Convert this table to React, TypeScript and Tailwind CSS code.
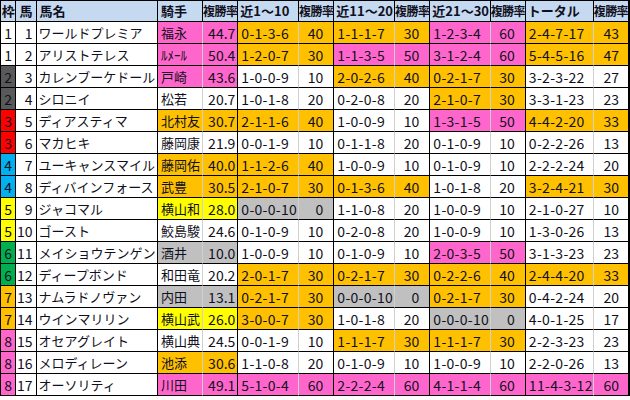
import React from 'react';

type Fill = 'w' | 'p' | 'o' | 'y' | 'g';

// セルの塗り(Excel の条件付き書式の色)
const FILL: Record<Fill, string> = {
    w: 'bg-white',
    p: 'bg-[#ff66cc]',
    o: 'bg-[#ffc000]',
    y: 'bg-[#ffff00]',
    g: 'bg-[#c0c0c0]',
};

// 枠番の色
const FRAME: Record<number, string> = {
    1: 'bg-white',
    2: 'bg-[#595959]',
    3: 'bg-[#ff0000]',
    4: 'bg-[#00b0f0]',
    5: 'bg-[#ffff00]',
    6: 'bg-[#00b050]',
    7: 'bg-[#ffc000]',
    8: 'bg-[#ff66cc]',
};

type Pair = [string, string, Fill];

type Row = {
    frame: number;
    no: number;
    name: string;
    jockey: string;
    rate: string;
    jf: Fill;
    recent: [Pair, Pair, Pair];
    total: Pair;
};

const rows: Row[] = [
    { frame: 1, no: 1, name: 'ワールドプレミア', jockey: '福永', rate: '44.7', jf: 'p', recent: [['0-1-3-6', '40', 'o'], ['1-1-1-7', '30', 'o'], ['1-2-3-4', '60', 'p']], total: ['2-4-7-17', '43', 'o'] },
    { frame: 1, no: 2, name: 'アリストテレス', jockey: 'ﾙﾒｰﾙ', rate: '50.4', jf: 'p', recent: [['1-2-0-7', '30', 'o'], ['1-1-3-5', '50', 'p'], ['3-1-2-4', '60', 'p']], total: ['5-4-5-16', '47', 'o'] },
    { frame: 2, no: 3, name: 'カレンブーケドール', jockey: '戸崎', rate: '43.6', jf: 'p', recent: [['1-0-0-9', '10', 'w'], ['2-0-2-6', '40', 'o'], ['0-2-1-7', '30', 'o']], total: ['3-2-3-22', '27', 'w'] },
    { frame: 2, no: 4, name: 'シロニイ', jockey: '松若', rate: '20.7', jf: 'w', recent: [['1-0-1-8', '20', 'w'], ['0-2-0-8', '20', 'w'], ['2-1-0-7', '30', 'o']], total: ['3-3-1-23', '23', 'w'] },
    { frame: 3, no: 5, name: 'ディアスティマ', jockey: '北村友', rate: '30.7', jf: 'o', recent: [['2-1-1-6', '40', 'o'], ['1-0-0-9', '10', 'w'], ['1-3-1-5', '50', 'p']], total: ['4-4-2-20', '33', 'o'] },
    { frame: 3, no: 6, name: 'マカヒキ', jockey: '藤岡康', rate: '21.9', jf: 'w', recent: [['0-0-1-9', '10', 'w'], ['0-1-1-8', '20', 'w'], ['0-1-0-9', '10', 'w']], total: ['0-2-2-26', '13', 'w'] },
    { frame: 4, no: 7, name: 'ユーキャンスマイル', jockey: '藤岡佑', rate: '40.0', jf: 'o', recent: [['1-1-2-6', '40', 'o'], ['1-0-0-9', '10', 'w'], ['0-1-0-9', '10', 'w']], total: ['2-2-2-24', '20', 'w'] },
    { frame: 4, no: 8, name: 'ディバインフォース', jockey: '武豊', rate: '30.5', jf: 'o', recent: [['2-1-0-7', '30', 'o'], ['0-1-3-6', '40', 'o'], ['1-0-1-8', '20', 'w']], total: ['3-2-4-21', '30', 'o'] },
    { frame: 5, no: 9, name: 'ジャコマル', jockey: '横山和', rate: '28.0', jf: 'y', recent: [['0-0-0-10', '0', 'g'], ['1-1-0-8', '20', 'w'], ['1-0-0-9', '10', 'w']], total: ['2-1-0-27', '10', 'w'] },
    { frame: 5, no: 10, name: 'ゴースト', jockey: '鮫島駿', rate: '24.6', jf: 'w', recent: [['0-1-0-9', '10', 'w'], ['0-2-0-8', '20', 'w'], ['1-0-0-9', '10', 'w']], total: ['1-3-0-26', '13', 'w'] },
    { frame: 6, no: 11, name: 'メイショウテンゲン', jockey: '酒井', rate: '10.0', jf: 'g', recent: [['1-0-0-9', '10', 'w'], ['0-1-0-9', '10', 'w'], ['2-0-3-5', '50', 'p']], total: ['3-1-3-23', '23', 'w'] },
    { frame: 6, no: 12, name: 'ディープボンド', jockey: '和田竜', rate: '20.2', jf: 'w', recent: [['2-0-1-7', '30', 'o'], ['0-2-1-7', '30', 'o'], ['0-2-2-6', '40', 'o']], total: ['2-4-4-20', '33', 'o'] },
    { frame: 7, no: 13, name: 'ナムラドノヴァン', jockey: '内田', rate: '13.1', jf: 'g', recent: [['0-2-1-7', '30', 'o'], ['0-0-0-10', '0', 'g'], ['0-2-1-7', '30', 'o']], total: ['0-4-2-24', '20', 'w'] },
    { frame: 7, no: 14, name: 'ウインマリリン', jockey: '横山武', rate: '26.0', jf: 'y', recent: [['3-0-0-7', '30', 'o'], ['1-0-1-8', '20', 'w'], ['0-0-0-10', '0', 'g']], total: ['4-0-1-25', '17', 'w'] },
    { frame: 8, no: 15, name: 'オセアグレイト', jockey: '横山典', rate: '24.5', jf: 'w', recent: [['0-0-1-9', '10', 'w'], ['1-1-1-7', '30', 'o'], ['1-1-1-7', '30', 'o']], total: ['2-2-3-23', '23', 'w'] },
    { frame: 8, no: 16, name: 'メロディレーン', jockey: '池添', rate: '30.6', jf: 'o', recent: [['1-1-0-8', '20', 'w'], ['0-1-0-9', '10', 'w'], ['1-0-0-9', '10', 'w']], total: ['2-2-0-26', '13', 'w'] },
    { frame: 8, no: 17, name: 'オーソリティ', jockey: '川田', rate: '49.1', jf: 'p', recent: [['5-1-0-4', '60', 'p'], ['2-2-2-4', '60', 'p'], ['4-1-1-4', '60', 'p']], total: ['11-4-3-12', '60', 'p'] },
];

const widths = [18, 21, 123, 48, 35, 62, 35, 62, 34, 61, 35, 61, 36];

const td = 'h-[22px] p-0 border-b border-black whitespace-nowrap overflow-hidden';
const blackR = 'border-r border-r-black';
const grayR = 'border-r border-r-[#d0d0d0]';
const num = 'text-[14px]';
const rateHead = 'text-[12px] tracking-[-0.6px]';

const App: React.FC = () => {
    return (
        <div className="w-[630px] h-[400px] bg-white font-['Noto_Sans_CJK_JP',sans-serif] text-[13px] leading-[20px] text-[#101020]">
            <table className="table-fixed border-separate border-spacing-0">
                <colgroup>
                    {widths.map((w, i) => (
                        <col key={i} style={{ width: w }} />
                    ))}
                </colgroup>
                <thead>
                    <tr className="bg-[#c5d9f1] font-bold">
                        <th className={`${td} border-t border-l border-black ${blackR} text-center`}>枠</th>
                        <th className={`${td} border-t ${blackR} text-center`}>馬</th>
                        <th className={`${td} border-t ${blackR} text-left pl-[3px]`}>馬名</th>
                        <th className={`${td} border-t ${blackR} text-left pl-[3px]`}>騎手</th>
                        <th className={`${td} border-t ${blackR} ${rateHead}`}>複勝率</th>
                        <th className={`${td} border-t ${blackR} text-left pl-[2px]`}>近1～10</th>
                        <th className={`${td} border-t ${blackR} ${rateHead}`}>複勝率</th>
                        <th className={`${td} border-t ${blackR} text-left pl-[2px]`}>近11～20</th>
                        <th className={`${td} border-t ${blackR} ${rateHead}`}>複勝率</th>
                        <th className={`${td} border-t ${blackR} text-left pl-[2px]`}>近21～30</th>
                        <th className={`${td} border-t ${blackR} ${rateHead}`}>複勝率</th>
                        <th className={`${td} border-t ${blackR} text-left pl-[2px]`}>トータル</th>
                        <th className={`${td} border-t border-r-2 border-r-black ${rateHead}`}>複勝率</th>
                    </tr>
                </thead>
                <tbody>
                    {rows.map((r) => (
                        <tr key={r.no}>
                            <td className={`${td} ${num} border-l border-l-black ${blackR} ${FRAME[r.frame]} text-center`}>{r.frame}</td>
                            <td className={`${td} ${num} ${blackR} text-right pr-[3px]`}>{r.no}</td>
                            <td className={`${td} ${blackR} pl-[2px]`}>{r.name}</td>
                            <td className={`${td} ${grayR} ${FILL[r.jf]} pl-[3px]`}>{r.jockey}</td>
                            <td className={`${td} ${num} ${blackR} ${FILL[r.jf]} text-right pr-[2px]`}>{r.rate}</td>
                            {r.recent.map(([rec, pct, f], i) => (
                                <React.Fragment key={i}>
                                    <td className={`${td} ${num} tracking-[0.3px] ${grayR} ${FILL[f]} pl-[3px]`}>{rec}</td>
                                    <td className={`${td} ${num} ${blackR} ${FILL[f]} text-right pr-[10px]`}>{pct}</td>
                                </React.Fragment>
                            ))}
                            <td className={`${td} ${num} tracking-[0.3px] ${grayR} ${FILL[r.total[2]]} pl-[3px]`}>{r.total[0]}</td>
                            <td className={`${td} ${num} border-r-2 border-r-black ${FILL[r.total[2]]} text-right pr-[9px]`}>{r.total[1]}</td>
                        </tr>
                    ))}
                </tbody>
            </table>
        </div>
    );
};

export default App;
